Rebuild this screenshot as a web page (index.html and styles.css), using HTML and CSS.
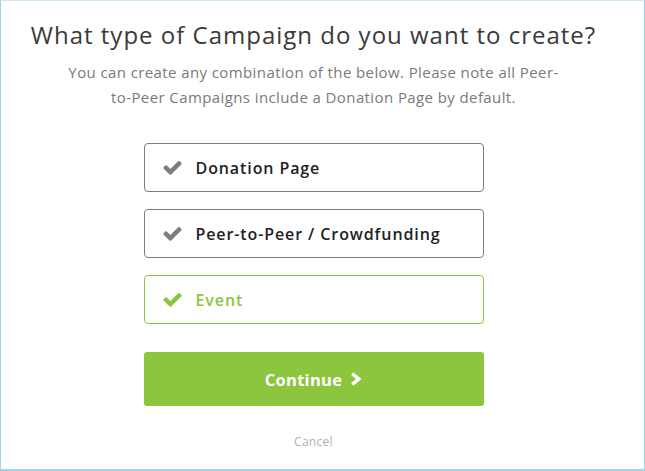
FILE: index.html
```html
<!DOCTYPE html>
<html>
<head>
<meta charset="utf-8">
<link rel="stylesheet" href="styles.css">
</head>
<body>
<div class="frame">
  <h1 class="title">What type of Campaign do you want to create?</h1>
  <p class="subtitle">You can create any combination of the below. Please note all Peer-<br>to-Peer Campaigns include a Donation Page by default.</p>
  <div class="options">
    <div class="option">
      <svg class="check" viewBox="0 0 1792 1792"><path d="M1671 566q0 40-28 68l-724 724-136 136q-28 28-68 28t-68-28l-136-136-362-362q-28-28-28-68t28-68l136-136q28-28 68-28t68 28l294 295 656-657q28-28 68-28t68 28l136 136q28 28 28 68z"/></svg>
      <span>Donation Page</span>
    </div>
    <div class="option">
      <svg class="check" viewBox="0 0 1792 1792"><path d="M1671 566q0 40-28 68l-724 724-136 136q-28 28-68 28t-68-28l-136-136-362-362q-28-28-28-68t28-68l136-136q28-28 68-28t68 28l294 295 656-657q28-28 68-28t68 28l136 136q28 28 28 68z"/></svg>
      <span>Peer-to-Peer / Crowdfunding</span>
    </div>
    <div class="option selected">
      <svg class="check" viewBox="0 0 1792 1792"><path d="M1671 566q0 40-28 68l-724 724-136 136q-28 28-68 28t-68-28l-136-136-362-362q-28-28-28-68t28-68l136-136q28-28 68-28t68 28l294 295 656-657q28-28 68-28t68 28l136 136q28 28 28 68z"/></svg>
      <span>Event</span>
    </div>
  </div>
  <button class="continue">Continue <svg class="chev" viewBox="0 0 12 14"><polyline points="2.2,1.6 8.8,7 2.2,12.4" fill="none" stroke="#fff" stroke-width="3.4" stroke-linejoin="miter"/></svg></button>
  <div class="cancel">Cancel</div>
</div>
</body>
</html>
```
FILE: styles.css
```css
html, body {
  margin: 0;
  padding: 0;
  background: #fff;
}
.frame {
  box-sizing: border-box;
  width: 645px;
  height: 471px;
  border: 1px solid #9ed5e9;
  border-top-color: #cfe9f3;
  border-bottom-width: 2px;
  padding-right: 18px;
  display: flex;
  flex-direction: column;
  align-items: center;
  font-family: "Open Sans", "Liberation Sans", sans-serif;
}
.title {
  margin: 18px 0 0;
  font-size: 24px;
  font-weight: 400;
  color: #3a3a3a;
  line-height: 32px;
  letter-spacing: 1px;
  white-space: nowrap;
}
.subtitle {
  margin: 9px 0 0;
  font-size: 15px;
  line-height: 25px;
  color: #7a7a7a;
  text-align: center;
  letter-spacing: 0.4px;
  white-space: nowrap;
}
.options {
  margin-top: 33px;
  display: flex;
  flex-direction: column;
  gap: 17px;
}
.option {
  box-sizing: border-box;
  width: 340px;
  height: 49px;
  border: 1px solid #7d7d7d;
  border-radius: 4px;
  display: flex;
  align-items: center;
  padding-left: 17px;
  font-size: 16px;
  font-weight: 600;
  letter-spacing: 0.9px;
  color: #222;
}
.option .check {
  width: 21px;
  height: 21px;
  fill: #7d7d7d;
  margin-right: 13px;
}
.option.selected {
  border-color: #8cc63f;
  color: #8cc63f;
}
.option.selected .check {
  fill: #8cc63f;
}
.continue {
  margin-top: 28px;
  width: 340px;
  height: 54px;
  border: none;
  border-radius: 3px;
  background: #8cc63f;
  color: #fff;
  font-family: inherit;
  font-size: 16.5px;
  font-weight: 700;
  letter-spacing: 0.3px;
  display: flex;
  align-items: center;
  justify-content: center;
  gap: 8px;
  padding: 0;
}
.continue .chev {
  width: 12px;
  height: 14px;
}
.cancel {
  margin-top: 27px;
  font-size: 12px;
  letter-spacing: 0.3px;
  color: #b0b0b0;
}
```
